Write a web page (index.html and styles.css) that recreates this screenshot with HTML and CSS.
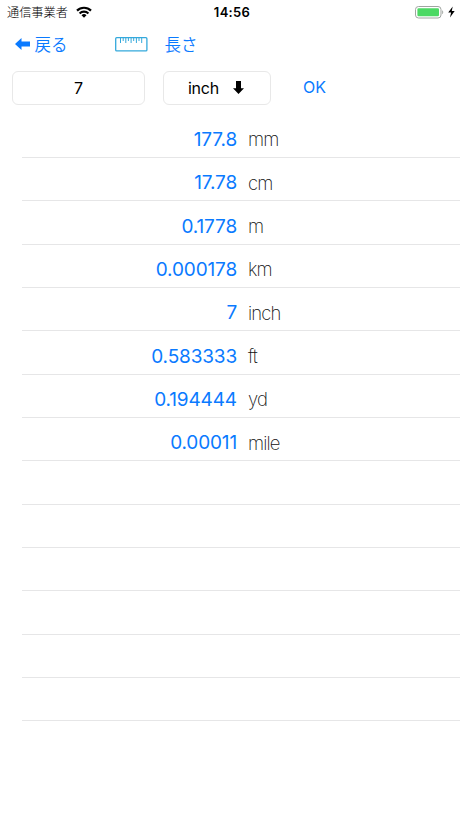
FILE: index.html
```html
<!DOCTYPE html>
<html lang="ja">
  <head>
    <meta charset="UTF-8" />
    <meta name="viewport" content="width=device-width, initial-scale=1.0" />
    <title>長さ</title>
    <link rel="stylesheet" href="styles.css">
  </head>
  <body>
    <div id="root">
      <div class="status-bar">
        <div class="carrier">
          <span>通信事業者</span>
          <svg class="wifi" width="16" height="12" viewBox="0 0 16 12">
            <g fill="none" stroke="#000" stroke-width="2.2">
              <path d="M1 4.6a10 10 0 0 1 14 0" />
              <path d="M3.6 7.5a6.3 6.3 0 0 1 8.8 0" />
            </g>
            <path d="M8 11.8L5.5 9.3a3.6 3.6 0 0 1 5 0z" />
          </svg>
        </div>
        <span class="clock">14:56</span>
        <div class="power">
          <svg width="29" height="13" viewBox="0 0 29 13">
            <rect x="0.5" y="0.5" width="25.5" height="11.5" rx="3" fill="#fff" stroke="#a0a5a1" />
            <rect x="2.4" y="2.3" width="21.6" height="7.9" rx="1.2" fill="#4cd964" />
            <path d="M27.2 4.2c1.4.7 1.4 3.3 0 4z" fill="#a0a5a1" />
          </svg>
          <svg width="7" height="12" viewBox="0 0 7 12">
            <path d="M4.7 0.4L0.2 6.5h2.9L2 11.4l4.7-6.3H3.8z" />
          </svg>
        </div>
      </div>
      <div class="nav">
        <a class="back">
          <svg width="15" height="12" viewBox="0 0 15 12">
            <path d="M0 6L6.5 0v3.4H15v5.2H6.5V12z" fill="currentColor" />
          </svg>
          <span>戻る</span>
        </a>
        <svg class="ruler" width="33" height="15" viewBox="0 0 33 15">
          <g fill="none" stroke="#35a9dc">
            <rect x="0.7" y="0.7" width="31.2" height="13.2" rx="1" stroke-width="1.3" />
            <path d="M5.5 1v5M8.2 1v3M10.8 1v5M13.4 1v3M16.1 1v5M18.7 1v3M21.4 1v5M24 1v3M26.7 1v5" />
          </g>
        </svg>
        <span class="title">長さ</span>
      </div>
      <div class="form">
        <div class="box amount">7</div>
        <div class="box unit-select">
          <span>inch</span>
          <svg width="11" height="13" viewBox="0 0 11 13">
            <path d="M3 0h5v7.2h3L5.5 13 0 7.2h3z" />
          </svg>
        </div>
        <a class="ok">OK</a>
      </div>
      <ul class="results">
        <li><span class="value">177.8</span><span class="unit">mm</span></li>
        <li><span class="value">17.78</span><span class="unit">cm</span></li>
        <li><span class="value">0.1778</span><span class="unit">m</span></li>
        <li><span class="value">0.000178</span><span class="unit">km</span></li>
        <li><span class="value">7</span><span class="unit">inch</span></li>
        <li><span class="value">0.583333</span><span class="unit">ft</span></li>
        <li><span class="value">0.194444</span><span class="unit">yd</span></li>
        <li><span class="value">0.00011</span><span class="unit">mile</span></li>
        <li></li>
        <li></li>
        <li></li>
        <li></li>
        <li></li>
        <li></li>
      </ul>
    </div>
  </body>
</html>
```

FILE: styles.css
```css
* {
  margin: 0;
  padding: 0;
  box-sizing: border-box;
}
body {
  background-color: #fff;
  color: #000;
  font-family: Inter, "Noto Sans CJK JP", sans-serif;
}
ul {
  list-style-type: none;
}
svg {
  display: block;
  flex: none;
}
#root {
  width: 100%;
  height: 100vh;
  overflow: hidden;
}
.status-bar {
  display: grid;
  grid-template-columns: 1fr auto 1fr;
  align-items: center;
  height: 24px;
  padding: 0 5px 0 7px;
}
.carrier {
  display: flex;
  align-items: center;
  gap: 8px;
  font-size: 12.2px;
  font-weight: 300;
}
.clock {
  padding-left: 2px;
  font-size: 13px;
  font-weight: 600;
  letter-spacing: 0.3px;
}
.power {
  display: flex;
  justify-content: flex-end;
  align-items: center;
  gap: 4px;
}
.nav {
  display: flex;
  align-items: center;
  height: 39px;
  padding-left: 14.5px;
  color: #0a7aff;
  font-size: 16.5px;
  font-weight: 350;
}
.back {
  display: flex;
  align-items: center;
  gap: 5px;
  width: 100px;
}
.ruler {
  margin-top: 2px;
}
.title {
  margin-left: 17px;
}
.form {
  display: flex;
  padding: 8px 12px 0;
  font-size: 16px;
}
.box {
  display: flex;
  justify-content: center;
  align-items: center;
  height: 34px;
  padding-bottom: 1px;
  border: 1px solid #e8e8e8;
  border-radius: 6px;
}
.amount {
  width: 133px;
}
.unit-select {
  gap: 14px;
  width: 108px;
  padding-right: 2px;
  margin-left: 18px;
  letter-spacing: -0.2px;
}
.ok {
  margin-left: 32px;
  color: #0a7aff;
  line-height: 33px;
}
.results {
  margin-top: 9.8px;
  padding-left: 22px;
}
.results li {
  display: flex;
  align-items: center;
  gap: 11px;
  height: 43.33px;
  padding-top: 7px;
  border-bottom: 1px solid #e6e6e7;
  font-size: 19px;
}
.value {
  width: 215px;
  color: #0a7aff;
  font-weight: 370;
  letter-spacing: -0.15px;
  text-align: right;
}
.unit {
  color: #111;
  font-size: 18.5px;
  font-weight: 200;
  letter-spacing: -0.9px;
}
```
